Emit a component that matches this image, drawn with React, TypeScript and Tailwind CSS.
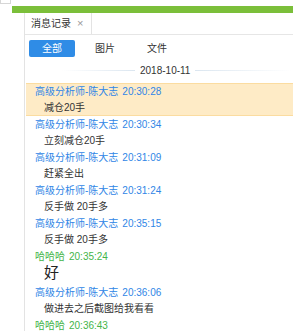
import React from "react";

type Msg = { name: string; time: string; text: string; self?: boolean; big?: boolean; hl?: boolean };

const msgs: Msg[] = [
  { name: "高级分析师-陈大志", time: "20:30:28", text: "减仓20手", hl: true },
  { name: "高级分析师-陈大志", time: "20:30:34", text: "立刻减仓20手" },
  { name: "高级分析师-陈大志", time: "20:31:09", text: "赶紧全出" },
  { name: "高级分析师-陈大志", time: "20:31:24", text: "反手做 20手多" },
  { name: "高级分析师-陈大志", time: "20:35:15", text: "反手做 20手多" },
  { name: "哈哈哈", time: "20:35:24", text: "好", self: true, big: true },
  { name: "高级分析师-陈大志", time: "20:36:06", text: "做进去之后截图给我看看" },
  { name: "哈哈哈", time: "20:36:43", text: "", self: true },
];

export default function App() {
  return (
    <div
      className="relative w-[293px] h-[331px] overflow-hidden bg-white text-[10px] text-[#333]"
      style={{ fontFamily: '"Liberation Sans", "Noto Sans CJK SC", sans-serif' }}
    >
      <div className="h-[6px] flex">
        <div className="w-[11px] h-[4px] border border-t-0 border-[#d6d6d6]" />
      </div>
      <div className="ml-[12px] h-[7px] bg-[#7bbf3a]" />
      <div className="ml-[24px] border-l border-[#e3e3e3] h-[320px]">
        <div className="h-[22px] flex border-b border-[#e6e6e6]">
          <div className="w-[67px] border-r border-[#e3e3e3] flex items-center pl-[6px] gap-[6px]">
            <span>消息记录</span>
            <span className="text-[#999] text-[11px] leading-none">×</span>
          </div>
        </div>
        <div className="flex items-center h-[17px] mt-[5px] ml-[4px]">
          <div className="w-[46px] h-[17px] rounded-[2px] bg-[#2f8ce6] text-white flex items-center justify-center">全部</div>
          <div className="ml-[20px]">图片</div>
          <div className="ml-[32px]">文件</div>
        </div>
        <div className="h-[26px] flex items-center">
          <div className="ml-[37px] w-[73px] h-px bg-gradient-to-r from-transparent to-[#dbe6f0]" />
          <div className="ml-[5px] shrink-0 whitespace-nowrap text-[#333]">2018-10-11</div>
          <div className="ml-[5px] flex-1 h-px bg-gradient-to-r from-[#dbe6f0] to-transparent mr-[2px]" />
        </div>
        <div className="ml-[1px]">
          {msgs.map((m, i) => (
            <div
              key={i}
              className={
                (m.hl ? "bg-[#feebc6] border-y border-[#fbdca0] " : "border-y border-transparent ") +
                (m.big ? "h-[36px]" : "h-[33px]") +
                " pl-[9px]"
              }
            >
              <div className={"h-[15px] flex items-center whitespace-nowrap " + (m.self ? "text-[#44b54a]" : "text-[#2f86e6]")}>
                <span>{m.name}</span>
                <span className="ml-[4px]">{m.time}</span>
              </div>
              {m.big ? (
                <div className="h-[19px] flex items-center pl-[9px] text-[15px] text-[#222]">{m.text}</div>
              ) : (
                <div className="h-[16px] flex items-center pl-[9px] whitespace-nowrap">{m.text}</div>
              )}
            </div>
          ))}
        </div>
      </div>
    </div>
  );
}
